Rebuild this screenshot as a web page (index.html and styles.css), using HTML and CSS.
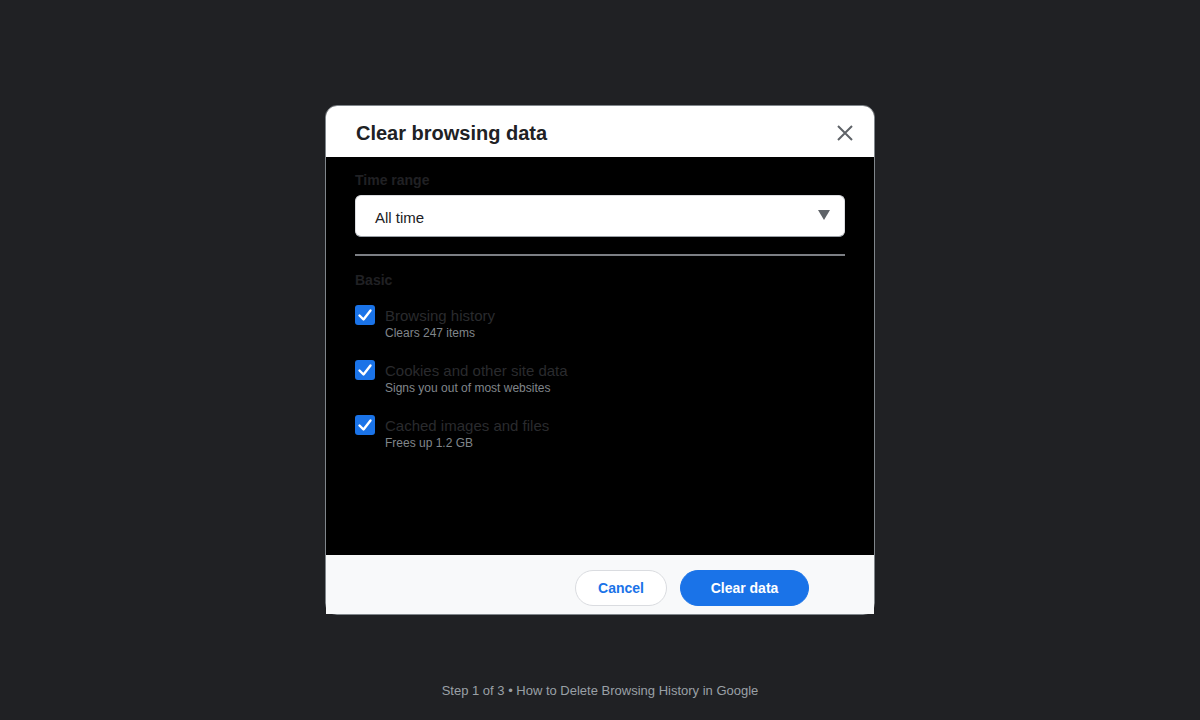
FILE: index.html
```html
<!DOCTYPE html>
<html lang="en">
<head>
<meta charset="utf-8">
<title>Clear browsing data</title>
<link rel="stylesheet" href="styles.css">
</head>
<body>
<div class="page">
  <div class="dialog">
    <div class="dlg-header">
      <h1 class="dlg-title">Clear browsing data</h1>
      <button class="close-btn" aria-label="Close">
        <svg width="18" height="18" viewBox="0 0 18 18"><path d="M2 2 L16 16 M16 2 L2 16" stroke="#5f6368" stroke-width="2" fill="none"/></svg>
      </button>
    </div>
    <div class="dlg-body">
      <div class="field-label">Time range</div>
      <div class="select">
        <span class="select-value">All time</span>
        <svg class="select-arrow" width="12" height="10" viewBox="0 0 12 10"><polygon points="0,0 12,0 6,10" fill="#5f6368"/></svg>
      </div>
      <div class="divider"></div>
      <div class="field-label section">Basic</div>
      <div class="items">
        <div class="item">
          <span class="checkbox"><svg width="20" height="20" viewBox="0 0 20 20"><path d="M4.5 10.5 L8.5 14.5 L15.5 5.5" stroke="#fff" stroke-width="2.4" fill="none" stroke-linecap="round" stroke-linejoin="round"/></svg></span>
          <div class="item-text">
            <div class="item-title">Browsing history</div>
            <div class="item-sub">Clears 247 items</div>
          </div>
        </div>
        <div class="item">
          <span class="checkbox"><svg width="20" height="20" viewBox="0 0 20 20"><path d="M4.5 10.5 L8.5 14.5 L15.5 5.5" stroke="#fff" stroke-width="2.4" fill="none" stroke-linecap="round" stroke-linejoin="round"/></svg></span>
          <div class="item-text">
            <div class="item-title">Cookies and other site data</div>
            <div class="item-sub">Signs you out of most websites</div>
          </div>
        </div>
        <div class="item">
          <span class="checkbox"><svg width="20" height="20" viewBox="0 0 20 20"><path d="M4.5 10.5 L8.5 14.5 L15.5 5.5" stroke="#fff" stroke-width="2.4" fill="none" stroke-linecap="round" stroke-linejoin="round"/></svg></span>
          <div class="item-text">
            <div class="item-title">Cached images and files</div>
            <div class="item-sub">Frees up 1.2 GB</div>
          </div>
        </div>
      </div>
    </div>
    <div class="dlg-footer">
      <button class="btn btn-cancel">Cancel</button>
      <button class="btn btn-primary">Clear data</button>
    </div>
  </div>
  <div class="caption">Step 1 of 3 • How to Delete Browsing History in Google</div>
</div>
</body>
</html>
```
FILE: styles.css
```css
* { box-sizing: border-box; }
html, body {
  margin: 0;
  padding: 0;
  background: #202124;
  font-family: "Liberation Sans", Arial, sans-serif;
}
.page {
  width: 1200px;
  height: 720px;
  padding-top: 105px;
  display: flex;
  flex-direction: column;
  align-items: center;
}
.dialog {
  width: 550px;
  border: 1px solid #80868b;
  border-radius: 12px;
  background: #000;
  display: flex;
  flex-direction: column;
}
.dlg-header {
  height: 51px;
  background: #fff;
  border-radius: 11px 11px 0 0;
  display: flex;
  align-items: center;
  justify-content: space-between;
  padding: 2px 20px 0 30px;
}
.dlg-title {
  margin: 0;
  font-size: 20px;
  font-weight: 700;
  color: #202124;
  line-height: 24px;
}
.close-btn {
  border: 0;
  background: transparent;
  padding: 0;
  width: 18px;
  height: 18px;
  display: flex;
  cursor: pointer;
}
.dlg-body {
  height: 398px;
  padding: 15px 29px 0 29px;
  display: flex;
  flex-direction: column;
}
.field-label {
  font-size: 14px;
  font-weight: 700;
  line-height: 16px;
  color: #202124;
}
.field-label.section {
  margin-top: 16px;
}
.select {
  margin-top: 7px;
  height: 42px;
  background: #fff;
  border: 1px solid #dadce0;
  border-bottom-color: #9aa0a6;
  border-radius: 6px;
  display: flex;
  align-items: center;
  justify-content: space-between;
  padding: 2px 14px 0 19px;
}
.select-value {
  font-size: 15px;
  color: #202124;
}
.select-arrow { margin-top: -4px; }
.divider {
  margin-top: 17px;
  height: 2px;
  background: #7c7f84;
}
.items {
  margin-top: 17px;
  display: flex;
  flex-direction: column;
  gap: 19px;
}
.item {
  display: flex;
  align-items: flex-start;
  gap: 10px;
}
.checkbox {
  width: 20px;
  height: 20px;
  border-radius: 3px;
  background: #1a73e8;
  display: flex;
  flex-shrink: 0;
}
.item-text {
  padding-top: 2px;
}
.item-title {
  font-size: 15px;
  line-height: 18px;
  color: #2a2b2e;
}
.item-sub {
  font-size: 12px;
  line-height: 15px;
  padding-top: 1px;
  color: #80868b;
}
.dlg-footer {
  height: 59px;
  background: #f8f9fa;
  display: flex;
  justify-content: flex-end;
  align-items: flex-start;
  gap: 13px;
  padding: 15px 65px 0 0;
}
.btn {
  height: 36px;
  border-radius: 18px;
  font-family: "Liberation Sans", Arial, sans-serif;
  font-size: 14px;
  font-weight: 700;
  cursor: pointer;
}
.btn-cancel {
  width: 92px;
  background: #fff;
  border: 1px solid #dadce0;
  color: #1a73e8;
}
.btn-primary {
  width: 129px;
  background: #1a73e8;
  border: 1px solid #1a73e8;
  color: #fff;
}
.caption {
  margin-top: 68px;
  font-size: 13px;
  line-height: 16px;
  color: #9aa0a6;
}
```
